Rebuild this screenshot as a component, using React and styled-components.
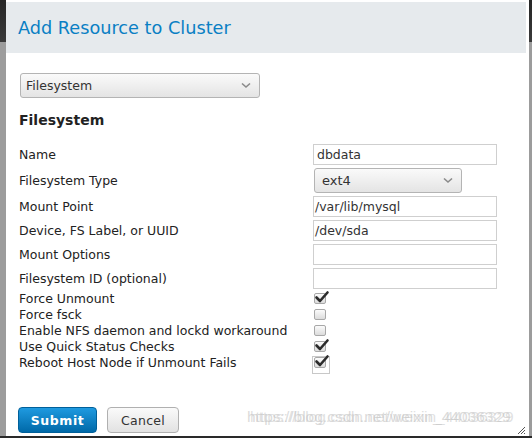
import React from 'react';
import styled, { createGlobalStyle } from 'styled-components';

const GlobalStyle = createGlobalStyle`
  html, body {
    margin: 0;
    padding: 0;
    background: #2a2a2a;
  }
  * { box-sizing: border-box; }
`;

const Frame = styled.div`
  display: flex;
  width: 532px;
  height: 438px;
  overflow: hidden;
  font-family: "DejaVu Sans", sans-serif;
`;

const Strip = styled.div`
  width: ${({ w }) => w}px;
  height: 436px;
  flex: none;
  background: linear-gradient(to bottom, #262626 0, #3a3a3a 42px, #9c9c9c 42px, #9c9c9c 100%);
`;

const Dialog = styled.div`
  position: relative;
  width: 523px;
  height: 436px;
  flex: none;
  background: #fff;
  padding-top: 2px;
  display: flex;
  flex-direction: column;
`;

const Header = styled.div`
  height: 51px;
  margin-right: 3px;
  background: #e6eaed;
  display: flex;
  align-items: center;
  padding-left: 12px;
`;

const Title = styled.h1`
  margin: 0;
  font-size: 17.7px;
  font-weight: normal;
  color: #0a7fc4;
`;

const Body = styled.div`
  padding: 20px 13px 0 13px;
  display: flex;
  flex-direction: column;
`;

const Select = styled.div`
  width: ${({ w }) => w}px;
  height: 25px;
  margin-left: ${({ ml }) => ml || 0}px;
  border: 1px solid #b4b4b4;
  border-radius: 3px;
  background: linear-gradient(to bottom, #fafafa, #e4e4e4);
  display: flex;
  align-items: center;
  justify-content: space-between;
  padding: 0 8px 0 ${({ pl }) => pl}px;
  font-size: ${({ fs }) => fs}px;
  color: #333;
`;

const Chevron = () => (
  <svg width="10" height="7" viewBox="0 0 10 7">
    <path d="M1 1.5 L5 5 L9 1.5" fill="none" stroke="#8a8a8a" strokeWidth="1.6" />
  </svg>
);

const Heading = styled.h2`
  margin: 14px 0 15px 0;
  font-size: 14px;
  font-weight: bold;
  color: #222;
  line-height: 17px;
`;

const Form = styled.div`
  display: grid;
  grid-template-columns: 294px 184px;
  row-gap: 3px;
  align-items: center;
`;

const Label = styled.div`
  font-size: 12.5px;
  color: #222;
  line-height: 15px;
  white-space: nowrap;
`;

const Input = styled.div`
  height: 21px;
  border: 1px solid #cfcfcf;
  display: flex;
  align-items: center;
  padding-left: ${({ pl }) => pl ?? 3}px;
  font-size: 12.5px;
  color: #333;
`;

const Checks = styled.div`
  display: grid;
  grid-template-columns: 294px 184px;
  grid-auto-rows: 16px;
  align-items: center;
  margin-top: 1px;
`;

const BoxCell = styled.div`
  position: relative;
  height: 16px;
  display: flex;
  align-items: center;
  padding-left: 1px;
`;

const Box = styled.div`
  position: relative;
  width: 12px;
  height: 11px;
  border: 1px solid #a8a8a8;
  border-radius: 2px;
  background: linear-gradient(to bottom, #fbfbfb, #dcdcdc);
`;

const Focus = styled.div`
  position: absolute;
  left: -3px;
  top: -2px;
  width: 18px;
  height: 18px;
  border: 1px solid #c8c8c8;
`;

const Tick = styled.svg`
  position: absolute;
  left: 0;
  top: -5px;
  overflow: visible;
`;

const Buttons = styled.div`
  display: flex;
  gap: 10px;
  margin-top: 37px;
  margin-left: -1px;
`;

const Button = styled.button`
  height: 26px;
  width: ${({ w }) => w}px;
  border-radius: 4px;
  font-family: "DejaVu Sans", sans-serif;
  font-size: 12.5px;
  cursor: pointer;
  border: 1px solid ${({ primary }) => (primary ? '#00609a' : '#b0b0b0')};
  background: ${({ primary }) =>
    primary ? 'linear-gradient(to bottom, #1f9ae0, #0069a8)' : 'linear-gradient(to bottom, #fafafa, #e2e2e2)'};
  color: ${({ primary }) => (primary ? '#fff' : '#333')};
  font-weight: ${({ primary }) => (primary ? 'bold' : 'normal')};
  letter-spacing: ${({ primary }) => (primary ? '0.6px' : '0.3px')};
`;

const Watermark = styled.div`
  position: absolute;
  left: 241px;
  top: 408px;
  font-family: "Liberation Sans", sans-serif;
  font-size: 15.5px;
  color: rgba(195, 195, 195, 0.6);
  text-shadow: 3px 0 rgba(195, 195, 195, 0.5);
  white-space: nowrap;
  pointer-events: none;
`;

const Grip = styled.svg`
  position: absolute;
  right: 3px;
  bottom: 1px;
`;

const fields = [
  { label: 'Name', value: 'dbdata' },
  { label: 'Filesystem Type', select: 'ext4' },
  { label: 'Mount Point', value: '/var/lib/mysql', pl: 1 },
  { label: 'Device, FS Label, or UUID', value: '/dev/sda', pl: 1 },
  { label: 'Mount Options', value: '' },
  { label: 'Filesystem ID (optional)', value: '' },
];

const checks = [
  { label: 'Force Unmount', on: true },
  { label: 'Force fsck', on: false },
  { label: 'Enable NFS daemon and lockd workaround', on: false },
  { label: 'Use Quick Status Checks', on: true },
  { label: 'Reboot Host Node if Unmount Fails', on: true, focus: true },
];

const Check = ({ on, focus }) => (
  <BoxCell>
    <Box>
      {focus && <Focus />}
      {on && (
        <Tick width="14" height="14" viewBox="0 0 14 14">
          <path d="M1.5 8.5 L5 12 L12.5 3.5" fill="none" stroke="#2b2b2b" strokeWidth="2.6" strokeLinecap="round" strokeLinejoin="round" />
        </Tick>
      )}
    </Box>
  </BoxCell>
);

const App = () => (
  <Frame>
    <GlobalStyle />
    <Strip w={6} />
    <Dialog>
      <Header>
        <Title>Add Resource to Cluster</Title>
      </Header>
      <Body>
        <Select w={240} pl={5} fs={12.5} ml={1}>
          <span>Filesystem</span>
          <Chevron />
        </Select>
        <Heading>Filesystem</Heading>
        <Form>
          {fields.map((f) => (
            <React.Fragment key={f.label}>
              <Label>{f.label}</Label>
              {f.select ? (
                <Select w={148} pl={7} fs={13} ml={1}>
                  <span>{f.select}</span>
                  <Chevron />
                </Select>
              ) : (
                <Input pl={f.pl}>{f.value}</Input>
              )}
            </React.Fragment>
          ))}
        </Form>
        <Checks>
          {checks.map((c) => (
            <React.Fragment key={c.label}>
              <Label>{c.label}</Label>
              <Check on={c.on} focus={c.focus} />
            </React.Fragment>
          ))}
        </Checks>
        <Buttons>
          <Button primary w={79}>Submit</Button>
          <Button w={72}>Cancel</Button>
        </Buttons>
      </Body>
      <Watermark>https://blog.csdn.net/weixin_44036329</Watermark>
      <Grip width="9" height="9" viewBox="0 0 9 9">
        <path d="M1 8 L8 1 M4 8 L8 4 M7 8 L8 7" stroke="#555" strokeWidth="1" />
      </Grip>
    </Dialog>
    <Strip w={3} />
  </Frame>
);

export default App;
